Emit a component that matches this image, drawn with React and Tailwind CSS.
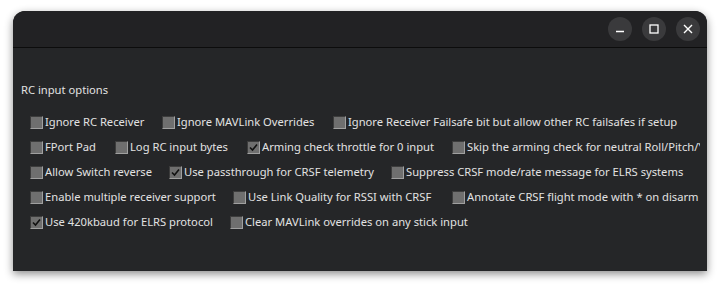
import React from 'react';

// item widths follow the flow layout of the original dialog
const rows = [
  [
    { label: 'Ignore RC Receiver', w: 'w-[132px]' },
    { label: 'Ignore MAVLink Overrides', w: 'w-[171px]' },
    { label: 'Ignore Receiver Failsafe bit but allow other RC failsafes if setup', w: '' },
  ],
  [
    { label: 'FPort Pad', w: 'w-[85px]' },
    { label: 'Log RC input bytes', w: 'w-[132px]' },
    { label: 'Arming check throttle for 0 input', checked: true, w: 'w-[205px]' },
    { label: 'Skip the arming check for neutral Roll/Pitch/Yaw sticks', w: '' },
  ],
  [
    { label: 'Allow Switch reverse', w: 'w-[139px]' },
    { label: 'Use passthrough for CRSF telemetry', checked: true, w: 'w-[222px]' },
    { label: 'Suppress CRSF mode/rate message for ELRS systems', w: '' },
  ],
  [
    { label: 'Enable multiple receiver support', w: 'w-[203px]' },
    { label: 'Use Link Quality for RSSI with CRSF', w: 'w-[219px]' },
    { label: 'Annotate CRSF flight mode with * on disarm', w: '' },
  ],
  [
    { label: 'Use 420kbaud for ELRS protocol', checked: true, w: 'w-[200px]' },
    { label: 'Clear MAVLink overrides on any stick input', w: '' },
  ],
];

const CheckBox = ({ checked }) => (
  <span className="w-[13px] h-[13px] shrink-0 flex items-center justify-center border border-t-[#3c3c3c] border-l-[#3c3c3c] border-b-[#a0a0a0] border-r-[#a0a0a0] bg-[#6f6f6f]">
    {checked && (
      <svg width="9" height="9" viewBox="0 0 9 9">
        <path d="M1 4.5 L3.5 7 L8 1.5" stroke="#111" strokeWidth="1.6" fill="none" />
      </svg>
    )}
  </span>
);

const WinButton = ({ children }) => (
  <div className="w-[24px] h-[24px] rounded-full bg-[#3a3a3c] flex items-center justify-center">
    {children}
  </div>
);

export default function App() {
  return (
    <div className="w-[720px] h-[287px] bg-white pt-[11px] px-[13px] overflow-hidden" style={{ fontFamily: '"Noto Sans", sans-serif' }}>
      <div className="w-[694px] h-[260px] rounded-t-[12px] bg-[#252628] overflow-hidden shadow-[0_3px_8px_rgba(0,0,0,0.45)] flex flex-col">
        {/* title bar */}
        <div className="h-[37px] bg-[#222224] border-b border-[#0c0c0c] flex items-center justify-end gap-[10px] pr-[7px] shrink-0">
          <WinButton>
            <svg width="10" height="10" viewBox="0 0 10 10">
              <path d="M1 7.5 H9" stroke="#fff" strokeWidth="1.4" />
            </svg>
          </WinButton>
          <WinButton>
            <svg width="10" height="10" viewBox="0 0 10 10">
              <rect x="1" y="1" width="8" height="8" stroke="#fff" strokeWidth="1.3" fill="none" />
            </svg>
          </WinButton>
          <WinButton>
            <svg width="10" height="10" viewBox="0 0 10 10">
              <path d="M1 1 L9 9 M9 1 L1 9" stroke="#fff" strokeWidth="1.4" />
            </svg>
          </WinButton>
        </div>

        {/* content */}
        <div className="pl-[8px] mr-[7px] pt-[34px] text-[11.2px] text-[#e2e2e2] leading-none overflow-hidden">
          <div className="h-[16px] flex items-center">RC input options</div>
          <div className="mt-[16px] pl-[9px] flex flex-col gap-[9px]">
            {rows.map((row, i) => (
              <div key={i} className="h-[16px] flex items-center whitespace-nowrap">
                {row.map((item) => (
                  <div key={item.label} className={`flex items-center gap-[2px] shrink-0 ${item.w}`}>
                    <CheckBox checked={item.checked} />
                    <span>{item.label}</span>
                  </div>
                ))}
              </div>
            ))}
          </div>
        </div>
      </div>
    </div>
  );
}
